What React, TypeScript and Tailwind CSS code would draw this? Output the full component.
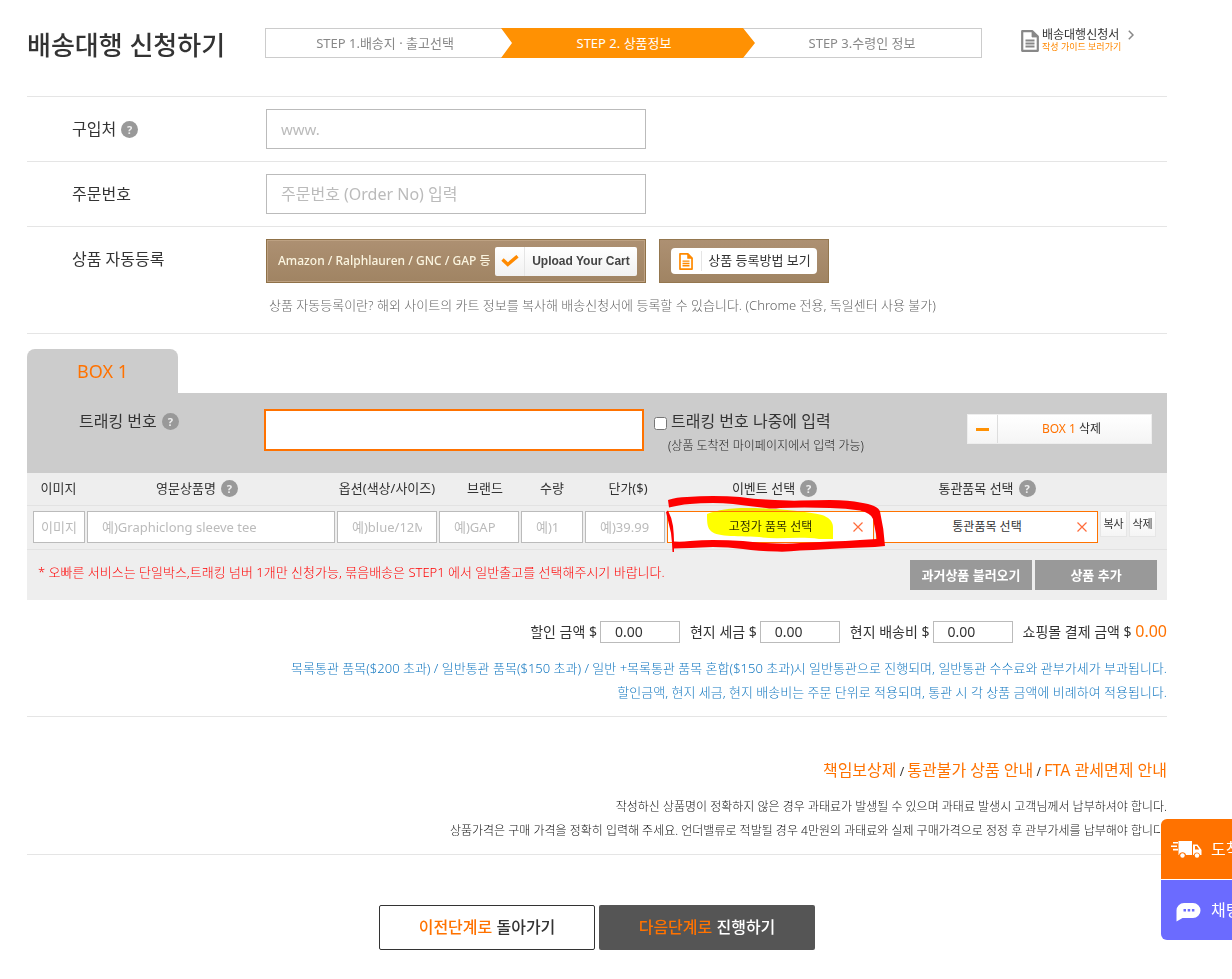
import { useState } from 'react';
import type { ReactNode } from 'react';

interface FieldRowProps {
	label: string;
	htmlFor?: string;
	help?: boolean;
	children: ReactNode;
}

interface AmountProps {
	id: string;
	label: string;
}

// Item columns; the product name column takes the remaining width
const columns = [
	{ label: '이미지', width: 'w-[59px]', pad: 'pl-[6px] pr-px', headPad: 'pl-1', placeholder: '이미지', inputPad: 'pl-[7px]' },
	{ label: '영문상품명', width: '', pad: 'px-px', headPad: 'pr-7', placeholder: '예)Graphiclong sleeve tee', inputPad: 'px-3.5', help: true },
	{ label: '옵션(색상/사이즈)', width: 'w-[102px]', pad: 'px-px', headPad: 'px-px', placeholder: '예)blue/12M', inputPad: 'px-3.5' },
	{ label: '브랜드', width: 'w-[82px]', pad: 'px-px', headPad: 'pl-3', placeholder: '예)GAP', inputPad: 'px-3.5' },
	{ label: '수량', width: 'w-[64px]', pad: 'px-px', headPad: 'px-px', placeholder: '예)1', inputPad: 'px-3.5' },
	{ label: '단가($)', width: 'w-[82px]', pad: 'px-px', headPad: 'pl-1.5', placeholder: '예)39.99', inputPad: 'px-3.5' },
];

function HelpIcon() {
	return (
		<button
			type="button"
			aria-label="도움말"
			className="flex size-[17px] shrink-0 items-center justify-center rounded-full bg-[#999] text-[11px] leading-[17px] font-bold text-[#eee]"
		>
			?
		</button>
	);
}

function DocIcon({ className }: { className: string }) {
	return (
		<svg viewBox="0 0 18 22" className={className} fill="none" stroke="currentColor">
			<path d="M1.2 1.2h10.2l5.4 5.4v14.2H1.2z" strokeWidth="2.2" strokeLinejoin="round" />
			<path d="M11 1v6h6z" fill="currentColor" strokeWidth="0.8" />
			<path d="M4.5 10.5h9M4.5 13.5h9M4.5 16.5h9" strokeWidth="1.8" />
		</svg>
	);
}

function CloseIcon() {
	return (
		<svg viewBox="0 0 12 12" className="size-3 text-[#ff6c3c]" stroke="currentColor" strokeWidth="1.2">
			<path d="M1.5 1.5l9 9M10.5 1.5l-9 9" />
		</svg>
	);
}

function FieldRow({ label, htmlFor, help, children }: FieldRowProps) {
	return (
		<div className="flex border-b border-[#e5e5e5] py-3">
			<div className="flex h-10 w-[239px] shrink-0 items-center gap-[5px] pl-[45px] text-[16px] text-[#333]">
				<label htmlFor={htmlFor}>{label}</label>
				{help && <HelpIcon />}
			</div>
			<div>{children}</div>
		</div>
	);
}

function Amount({ id, label }: AmountProps) {
	return (
		<div className="flex items-center gap-[3px]">
			<label htmlFor={id}>{label} $</label>
			<input
				id={id}
				defaultValue="0.00"
				className="h-[22px] w-20 border border-[#bbb] bg-white px-3.5 text-[14px] text-[#333]"
			/>
		</div>
	);
}

function Header() {
	return (
		<header className="flex h-[97px] items-start border-b border-[#e5e5e5] pt-7">
			<h1 className="w-[238px] shrink-0 text-[26px] leading-[34px] font-medium text-[#333]">배송대행 신청하기</h1>
			<ol className="flex w-[717px] text-center text-[13px] leading-7 text-[#888]">
				<li className="flex-1 border-y border-l border-[#ccc]">STEP 1.배송지 · 출고선택</li>
				<li className="z-10 -mr-3 -ml-[3px] w-[254px] bg-[#ff9103] py-px pr-2 text-white [clip-path:polygon(0_0,242px_0,100%_50%,242px_100%,0_100%,11px_50%)]">
					STEP 2. 상품정보
				</li>
				<li className="flex-1 border-y border-r border-[#ccc]">STEP 3.수령인 정보</li>
			</ol>
			<a href="#guide" className="ml-[39px] flex gap-[3px]">
				<DocIcon className="mt-0.5 h-[22px] w-[18px] text-[#888]" />
				<span className="block">
					<span className="block text-[12px] leading-[13px] text-[#333]">배송대행신청서</span>
					<span className="block text-[9px] leading-[11px] text-[#ff8800]">작성 가이드 보러가기</span>
				</span>
				<svg viewBox="0 0 6 10" className="mt-0.5 ml-1 h-2.5 w-1.5" fill="none" stroke="#888" strokeWidth="1.5">
					<path d="M0.8 0.8L5 5 0.8 9.2" />
				</svg>
			</a>
		</header>
	);
}

function AutoRegister() {
	return (
		<>
			<div className="flex gap-[13px]">
				<div className="flex h-11 w-[380px] items-center justify-between border border-[#8f7148] bg-linear-to-b from-[#ad9072] to-[#a08463] pr-2 pl-[11px] ring-1 ring-[#bda182] ring-inset">
					<span className="text-[12px] font-medium whitespace-nowrap text-[#fbf5e0]">Amazon / Ralphlauren / GNC / GAP 등</span>
					<button type="button" className="flex h-[29px] w-[142px] shrink-0 items-center rounded-xs bg-linear-to-b from-white to-[#f1f1f1]">
						<span className="flex h-full w-[30px] items-center justify-center border-r border-[#e5e5e5]">
							<svg viewBox="0 0 18 12" className="h-3 w-[18px]" fill="none" stroke="#ff8a00" strokeWidth="3.4">
								<path d="M1.5 4.5l5.3 5L16.5 1.2" />
							</svg>
						</span>
						<span className="flex-1 font-['Liberation_Sans',sans-serif] text-[12px] font-bold text-[#444]">Upload Your Cart</span>
					</button>
				</div>
				<div className="flex h-11 w-[170px] items-center border border-[#94774f] bg-linear-to-b from-[#ad9072] to-[#a08463] px-[11px]">
					<button type="button" className="flex h-[26px] w-full items-center rounded-sm bg-white">
						<span className="flex h-5 w-[31px] items-center justify-center border-r border-[#e5e5e5]">
							<DocIcon className="h-[17px] w-3.5 text-[#ff8a00]" />
						</span>
						<span className="flex-1 text-[13px] text-[#333]">상품 등록방법 보기</span>
					</button>
				</div>
			</div>
			<p className="mt-3 pb-1.5 pl-[3px] text-[13px] leading-5 font-light text-[#666]">
				상품 자동등록이란? 해외 사이트의 카트 정보를 복사해 배송신청서에 등록할 수 있습니다. (Chrome 전용, 독일센터 사용 불가)
			</p>
		</>
	);
}

// Red marker line drawn round the event button
function Scribble() {
	return (
		<svg
			viewBox="0 0 220 56"
			className="pointer-events-none absolute -top-[17px] left-0 z-10 h-14 w-[220px] overflow-visible"
		>
			<path
				d="M0 5C6 3 12 2 19 2Q32 1 45 1Q60 1 72 2Q86 4 98 4.500Q122 6 132 5.500Q150 5 162 5Q182 5 192 7.500Q210 10 212 16.500Q216 34 217 51L207 52Q180 53 162 54Q144 55 132 55.600Q120 57 109 56.600Q90 56 75 54Q60 52 45 52Q20 53 6 53.500L6 57L4.500 57Q4 46 3 38L-2 17L0 15.500Q4 23 5 31Q6 40 6 46.500Q14 47 22 46Q34 45 45 45Q60 45 75 46Q92 48 109 48.500Q122 49 132 48Q148 47 162 46.500Q178 46 192 45L209 44L205 24Q203 18 192 15.500Q178 13 162 13Q136 12 112 13Q104 14 98 13Q80 11 65 9Q55 8 45 8Q32 8 22 9Q10 10 1 12.600Z"
				fill="#fe0000"
			/>
		</svg>
	);
}

function ItemTable() {
	return (
		<table className="w-full table-fixed border-b border-[#e2e2e2] bg-[#eee]">
			<thead>
				<tr className="h-8 border-b border-[#e2e2e2] text-[13px] text-[#333]">
					{columns.map(col => (
						<th key={col.label} scope="col" className={`${col.width} ${col.headPad} py-0 font-normal whitespace-nowrap`}>
							<span className="flex items-center justify-center gap-[5px]">
								{col.label}
								{col.help && <HelpIcon />}
							</span>
						</th>
					))}
					<th scope="col" className="w-[209px] font-normal">
						<span className="flex items-center justify-center gap-[5px] pl-2">이벤트 선택 <HelpIcon /></span>
					</th>
					<th scope="col" className="w-[224px] font-normal">
						<span className="flex items-center justify-center gap-[5px]">통관품목 선택 <HelpIcon /></span>
					</th>
					<th className="w-[68px]" aria-label="관리" />
				</tr>
			</thead>
			<tbody>
				<tr className="h-11 align-top">
					{columns.map(col => (
						<td key={col.label} className={`${col.pad} pt-[5px]`}>
							<input
								aria-label={col.label}
								placeholder={col.placeholder}
								className={`h-8 w-full border border-[#bbb] bg-white text-[13px] text-[#333] placeholder:text-[#bbb] ${col.inputPad}`}
							/>
						</td>
					))}
					<td className="px-px pt-[5px]">
						<div className="relative flex h-8 items-center border border-[#ff7200] bg-white">
							<button type="button" className="flex-1 text-center text-[12px] text-[#333]">고정가 품목 선택</button>
							<svg viewBox="0 0 126 32" className="pointer-events-none absolute -top-1 left-[39px] h-8 w-[126px] mix-blend-multiply">
								<path d="M0 6C10 2 24 0 40 0C66 0 98 3 115 7C121 9 126 13 126 19V31H112C92 28 70 32 52 29C28 28 8 29 3 22C0 19 0 12 0 6Z" fill="#ff0" />
							</svg>
							<button type="button" aria-label="이벤트 선택 취소" className="absolute right-[9px]"><CloseIcon /></button>
							<Scribble />
						</div>
					</td>
					<td className="px-px pt-[5px]">
						<div className="relative flex h-8 items-center border border-[#ff7200] bg-white">
							<button type="button" className="flex-1 text-center text-[12px] text-[#333]">통관품목 선택</button>
							<button type="button" aria-label="통관품목 선택 취소" className="absolute right-[9px]"><CloseIcon /></button>
						</div>
					</td>
					<td className="pt-[5px] pl-px">
						<div className="flex gap-0.5 text-[11px] leading-6 text-[#333]">
							<button type="button" className="w-[27px] border border-[#e6e6e6] bg-linear-to-b from-white to-[#f5f5f5]">복사</button>
							<button type="button" className="w-[27px] border border-[#e6e6e6] bg-linear-to-b from-white to-[#f5f5f5]">삭제</button>
						</div>
					</td>
				</tr>
			</tbody>
		</table>
	);
}

function BoxPanel() {
	const [later, setLater] = useState(false);

	return (
		<section className="mt-[15px]">
			<h2 className="h-11 w-[151px] rounded-t-lg bg-[#ccc] text-center text-[18px] leading-[44px] text-[#ff7200]">BOX 1</h2>
			<div className="flex h-20 items-start bg-[#ccc] pt-4 pr-[15px]">
				<div className="flex h-6 w-[237px] shrink-0 items-center gap-[5px] pl-[52px] text-[16px] text-[#333]">
					<label htmlFor="tracking">트래킹 번호</label>
					<HelpIcon />
				</div>
				<input
					id="tracking"
					disabled={later}
					className="h-[42px] w-[380px] border-2 border-[#ff7200] bg-white px-3.5 text-[16px]"
				/>
				<div className="ml-2.5">
					<label className="flex h-6 items-center gap-1 text-[16px] text-[#333]">
						<input type="checkbox" checked={later} onChange={e => setLater(e.target.checked)} className="mt-1 size-[13px]" />
						트래킹 번호 나중에 입력
					</label>
					<p className="mt-1 pl-3.5 text-[12px] leading-[18px] font-light text-[#222]">(상품 도착전 마이페이지에서 입력 가능)</p>
				</div>
				<button type="button" className="mt-[5px] ml-auto flex h-[30px] w-[185px] items-center border border-[#eee] bg-linear-to-b from-white to-[#f5f5f5] text-[12px] text-[#333]">
					<span className="flex h-full w-[30px] items-center justify-center border-r border-[#ddd]">
						<span className="h-[3px] w-[13px] bg-[#ff9103]" />
					</span>
					<span className="flex-1 pr-1.5"><span className="text-[#ff7200]">BOX 1</span> 삭제</span>
				</button>
			</div>
			<ItemTable />
			<div className="flex h-[50px] items-start justify-between bg-[#eee] pt-2.5 pr-2.5 pl-[11px]">
				<p className="text-[13px] leading-6 font-light text-[#f00]">
					* 오빠른 서비스는 단일박스,트래킹 넘버 1개만 신청가능, 묶음배송은 STEP1 에서 일반출고를 선택해주시기 바랍니다.
				</p>
				<div className="flex gap-[3px] text-[13px] leading-[30px] font-bold text-white">
					<button type="button" className="w-[122px] bg-[#999]">과거상품 불러오기</button>
					<button type="button" className="w-[122px] bg-[#999]">상품 추가</button>
				</div>
			</div>
		</section>
	);
}

function QuickMenu() {
	return (
		<nav className="fixed top-[819px] right-0 w-[71px] overflow-hidden rounded-l-md text-[16px] whitespace-nowrap text-white">
			<a href="#arrival" className="flex h-[60px] items-center gap-[9px] bg-[#ff7200] pl-2.5">
				<svg viewBox="0 0 31 18" className="h-[18px] w-[31px] shrink-0" fill="currentColor">
					<path d="M2 2h5v1.600H2zM0 5.400h6V7H0zM2 8.800h5v1.600H2z" />
					<path d="M7.500 1H21v14h-6a3.600 3.600 0 0 0-7 0h-.5z" />
					<path d="M22 4.500h4.500l4 5.500v5h-1.500a3.200 3.200 0 0 0-6.200 0H22zM24 6v3.500h4.200L25.800 6z" fillRule="evenodd" />
					<circle cx="11.500" cy="15.500" r="2.200" />
					<circle cx="26" cy="15.500" r="2.200" />
				</svg>
				<span>도착</span>
			</a>
			<a href="#chat" className="mt-px flex h-[60px] items-center gap-[9px] bg-[#6b6bff] pl-[15px]">
				<svg viewBox="0 0 26 20" className="mt-1 h-5 w-[26px] shrink-0">
					<path d="M8 1h9a7.500 7.500 0 0 1 0 15H6.500L0.500 19.500V8.500A7.500 7.500 0 0 1 8 1z" fill="#fff" />
					<path d="M7.500 7h2.500v2.500H7.500zM11.700 7h2.500v2.500h-2.500zM15.900 7h2.500v2.500h-2.500z" fill="#6b6bff" />
				</svg>
				<span>채팅</span>
			</a>
		</nav>
	);
}

export default function App() {
	return (
		<div className="min-h-screen bg-white pr-[65px] pb-7 pl-[27px] font-['Noto_Sans','Noto_Sans_CJK_KR',sans-serif]">
			<Header />
			<main>
				<FieldRow label="구입처" htmlFor="shop" help>
					<input id="shop" placeholder="www." className="h-10 w-[380px] border border-[#bbb] px-3.5 text-[15px] placeholder:text-[#bbb]" />
				</FieldRow>
				<FieldRow label="주문번호" htmlFor="orderNo">
					<input id="orderNo" placeholder="주문번호 (Order No) 입력" className="h-10 w-[380px] border border-[#bbb] px-3.5 text-[16px] placeholder:text-[#bbb]" />
				</FieldRow>
				<FieldRow label="상품 자동등록">
					<AutoRegister />
				</FieldRow>

				<BoxPanel />

				<section className="border-b border-[#e5e5e5] pt-5 pb-3 text-right">
					<div className="flex h-6 items-center justify-end gap-2.5 text-[14px] text-[#333]">
						<Amount id="discount" label="할인 금액" />
						<Amount id="tax" label="현지 세금" />
						<Amount id="shipping" label="현지 배송비" />
						<p className="leading-5">쇼핑몰 결제 금액 $ <span className="text-[16px] leading-5 text-[#ff7200]">0.00</span></p>
					</div>
					<div className="mt-3 text-[13px] leading-6 font-light text-[#1478c0]">
						<p>목록통관 품목($200 초과) / 일반통관 품목($150 초과) / 일반 +목록통관 품목 혼합($150 초과)시 일반통관으로 진행되며, 일반통관 수수료와 관부가세가 부과됩니다.</p>
						<p>할인금액, 현지 세금, 현지 배송비는 주문 단위로 적용되며, 통관 시 각 상품 금액에 비례하여 적용됩니다.</p>
					</div>
				</section>

				<section className="border-b border-[#e5e5e5] pt-[41px] pb-[11px] text-right">
					<p className="text-[12px] leading-6 text-[#333]">
						<a href="#compensation" className="text-[16px] text-[#ff7200]">책임보상제</a> / <a href="#restricted" className="text-[16px] text-[#ff7200]">통관불가 상품 안내</a> / <a href="#fta" className="text-[16px] text-[#ff7200]">FTA 관세면제 안내</a>
					</p>
					<div className="mt-[11px] text-[12px] leading-6 font-light text-[#111]">
						<p>작성하신 상품명이 정확하지 않은 경우 과태료가 발생될 수 있으며 과태료 발생시 고객님께서 납부하셔야 합니다.</p>
						<p>상품가격은 구매 가격을 정확히 입력해 주세요. 언더밸류로 적발될 경우 4만원의 과태료와 실제 구매가격으로 정정 후 관부가세를 납부해야 합니다.</p>
					</div>
				</section>

				<div className="mt-[50px] flex justify-center gap-1 text-[16px]">
					<button type="button" className="h-[45px] w-[216px] rounded-xs border border-[#333] bg-white font-medium text-[#333]">
						<span className="text-[#ff7200]">이전단계로</span> 돌아가기
					</button>
					<button type="button" className="h-[45px] w-[216px] rounded-xs bg-[#555] font-medium text-white">
						<span className="text-[#ff7200]">다음단계로</span> 진행하기
					</button>
				</div>
			</main>
			<QuickMenu />
		</div>
	);
}
